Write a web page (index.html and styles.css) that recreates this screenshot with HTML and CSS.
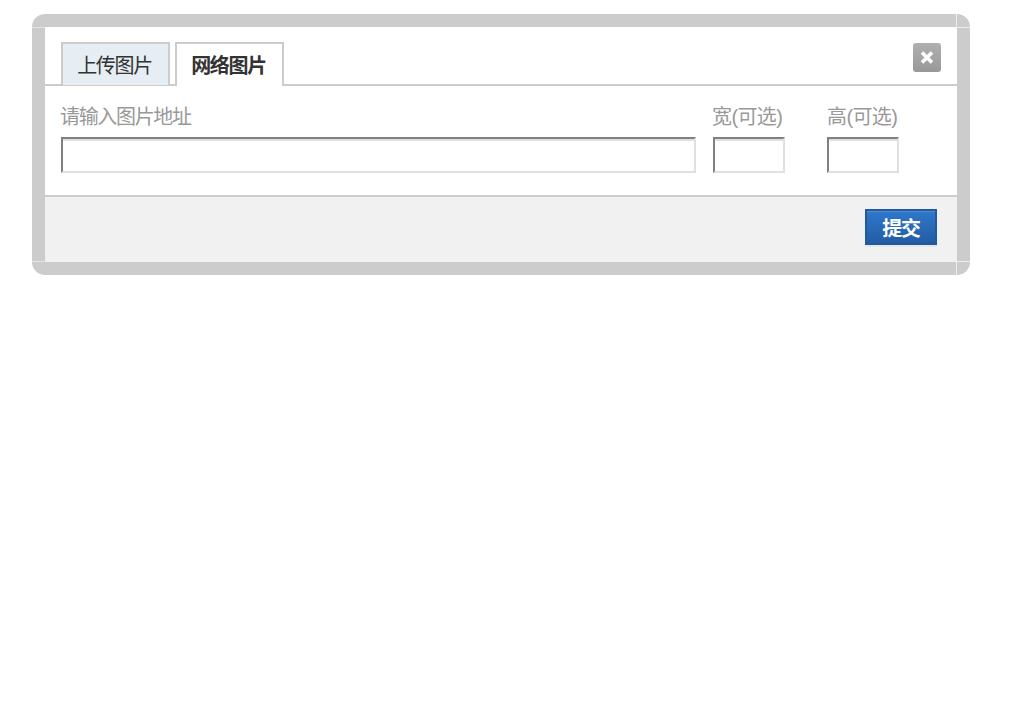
FILE: index.html
```html
<!DOCTYPE html>
<html lang="zh-CN">
<head>
  <meta charset="UTF-8" />
  <title>插入图片</title>
  <link rel="stylesheet" href="styles.css">
</head>
<body>
  <div class="dialog">
    <span class="seam seam-tl"></span>
    <span class="seam seam-tr"></span>
    <span class="seam seam-bl"></span>
    <span class="seam seam-br"></span>
    <div class="dialog-inner">
      <div class="tabs">
        <a class="tab">上传图片</a>
        <a class="tab active">网络图片</a>
        <button class="close">
          <svg width="16" height="15" viewBox="0 0 16 15"><path d="M3 2.5l10 10M13 2.5l-10 10" stroke="#fff" stroke-width="3.6" fill="none"/></svg>
        </button>
      </div>
      <div class="form">
        <div class="field field-url">
          <label>请输入图片地址</label>
          <input type="text">
        </div>
        <div class="field field-size">
          <label>宽(可选)</label>
          <input type="text">
        </div>
        <div class="field field-size field-height">
          <label>高(可选)</label>
          <input type="text">
        </div>
      </div>
      <div class="footer">
        <button class="submit">提交</button>
      </div>
    </div>
  </div>
</body>
</html>
```

FILE: styles.css
```css
* {
  margin: 0;
  padding: 0;
  box-sizing: border-box;
}

body {
  background: #fff;
  padding: 14px 0 0 32px;
  font-family: "Liberation Sans", "Noto Sans CJK SC", sans-serif;
}

.dialog {
  position: relative;
  width: 938px;
  height: 261px;
  border: 13px solid #ccc;
  border-radius: 13px;
}

.dialog-inner {
  background: #fff;
  height: 100%;
  display: flex;
  flex-direction: column;
}

/* thin light lines where the corner pieces meet the edges */
.seam {
  position: absolute;
  width: 14px;
  height: 14px;
}
.seam-tl {
  top: -13px;
  left: -13px;
  border-bottom: 1px solid #e4e4e4;
}
.seam-tr {
  top: -13px;
  right: -13px;
  border-bottom: 1px solid #eee;
  border-left: 1px solid #eee;
}
.seam-bl {
  bottom: -13px;
  left: -13px;
  border-top: 1px solid #e4e4e4;
}
.seam-br {
  bottom: -13px;
  right: -13px;
  border-top: 1px solid #eee;
  border-left: 1px solid #eee;
}

.tabs {
  display: flex;
  align-items: flex-end;
  gap: 5px;
  height: 59px;
  padding: 0 16px;
  border-bottom: 2px solid #ccc;
}

.tab {
  height: 43px;
  width: 109px;
  margin-bottom: -1px;
  padding-right: 2px;
  border: 2px solid #ccc;
  border-bottom: none;
  background: #e6edf3;
  color: #333;
  font-size: 20px;
  letter-spacing: -1.33px;
  line-height: 44px;
  text-align: center;
}
.tab.active {
  background: #fff;
  font-weight: bold;
  margin-bottom: -2px;
  height: 44px;
}

.close {
  display: flex;
  justify-content: center;
  align-items: center;
  width: 28px;
  height: 29px;
  margin: 0 0 12px auto;
  border: none;
  border-radius: 3px;
  background: linear-gradient(#b0b0b0, #989898);
}

.form {
  display: flex;
  height: 109px;
  padding: 18px 0 0 16px;
}

.field label {
  display: block;
  height: 33px;
  margin-left: -1px;
  color: #999;
  font-size: 20px;
  letter-spacing: -1.33px;
  line-height: 27px;
}

.field input {
  display: block;
  height: 36px;
  border: 2px solid;
  border-color: #808080 #e0e0e0 #e0e0e0 #808080;
  background: #fff;
  box-shadow: inset 0 2px 0 #e0e0e0;
}

.field-url {
  width: 652px;
}
.field-url input {
  width: 635px;
}
.field-size {
  width: 114px;
}
.field-size label {
  letter-spacing: -0.6px;
}
.field-height label {
  margin-left: 0;
}
.field-size input {
  width: 72px;
}

.footer {
  flex: 1;
  display: flex;
  justify-content: flex-end;
  align-items: flex-start;
  padding: 12px 20px 0 0;
  background: #f1f1f1;
  border-top: 2px solid #ccc;
}

.submit {
  width: 72px;
  height: 36px;
  border: 2px solid #235a9f;
  background: linear-gradient(#2f78cb, #235ca4);
  box-shadow: inset 0 1px 0 #4c8dd6, 0 2px 0 #e6e6e6;
  color: #fff;
  font-family: inherit;
  font-size: 20px;
  letter-spacing: -1.33px;
  font-weight: bold;
}
```
